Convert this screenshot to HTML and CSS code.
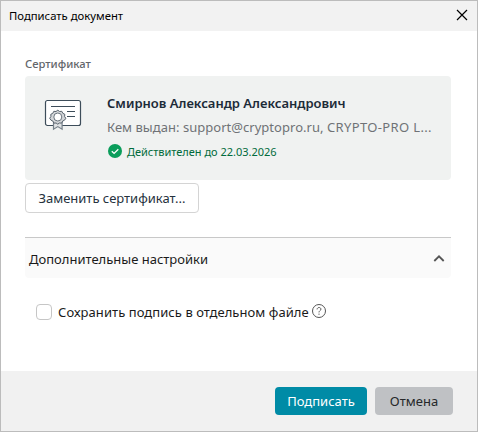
FILE: index.html
```html
<!DOCTYPE html>
<html lang="ru">
<head>
<meta charset="utf-8">
<title>Подписать документ</title>
<link rel="stylesheet" href="styles.css">
</head>
<body>
<div class="window">
  <header class="titlebar">
    <span class="title">Подписать документ</span>
    <svg class="close" width="12" height="12" viewBox="0 0 12 12"><path d="M1 1l10 10M11 1L1 11"/></svg>
  </header>
  <main class="content">
    <div class="label"><span>Сертификат</span></div>
    <section class="card">
      <svg class="cert-icon" width="38" height="32" viewBox="0 0 38 32">
        <rect class="paper" x="1.500" y="1.500" width="35" height="25" rx="2"/>
        <path d="M7 7.500h24M23 12.500h8M23 17.500h8"/>
        <path class="ribbon" d="M9.500 21v9.200l4.300-2.600 4.300 2.600V21z"/>
        <path class="seal-edge" d="M13.800 11.200l1.800 1.300 2.200-.2 1 2 2 1-.2 2.200 1.200 1.800-1.200 1.800-2 1-1 2-2.200-.1-1.600 1.200-1.700-1.200-2.200.1-1-2-2-1-1.200-1.800 1.200-1.800-.1-2.200 2-1 1-2 2.200.2z"/>
        <circle class="seal" cx="13.800" cy="18" r="4"/>
      </svg>
      <div class="info">
        <div class="name"><span>Смирнов Александр Александрович</span></div>
        <div class="issuer"><span>Кем выдан: support@cryptopro.ru, <span class="org">CRYPTO-PRO L...</span></span></div>
        <div class="valid">
          <svg width="14" height="14" viewBox="0 0 14 14"><circle cx="7" cy="7" r="7"/><path d="M3.800 7.200l2.300 2.200 4.200-4.200"/></svg>
          <span>Действителен до 22.03.2026</span>
        </div>
      </div>
    </section>
    <button class="replace"><span>Заменить сертификат...</span></button>
    <div class="accordion">
      <span>Дополнительные настройки</span>
      <svg width="12" height="8" viewBox="0 0 12 8"><path d="M1.300 6L6 1.300l4.700 4.700"/></svg>
    </div>
    <div class="option">
      <i class="checkbox"></i>
      <span>Сохранить подпись в отдельном файле</span>
      <svg width="14" height="14" viewBox="0 0 14 14"><circle cx="7" cy="7" r="6.500"/><path d="M5.100 5.400c0-2.500 3.800-2.500 3.800-.2 0 1.400-1.900 1.500-1.900 3.200M7 9.600v1.200"/></svg>
    </div>
  </main>
  <footer class="footer">
    <button class="primary"><span>Подписать</span></button>
    <button class="cancel"><span>Отмена</span></button>
  </footer>
</div>
</body>
</html>
```
FILE: styles.css
```css
* { box-sizing: border-box; }
body { margin: 0; font-family: "Noto Sans", sans-serif; font-size: 13px; color: #1a1a1a; }
svg { flex: none; fill: none; }
button { font: inherit; border-radius: 4px; padding: 0; display: flex; align-items: center; justify-content: center; }
span { white-space: nowrap; }
.window { width: 478px; height: 432px; border: 1px solid #bcbcbc; background: #fff; display: flex; flex-direction: column; }
.titlebar { height: 30px; background: #f2f2f2; display: flex; align-items: center; justify-content: space-between; padding: 0 9px 2px 8px; font-size: 11.3px; color: #000; }
.close { stroke: #000; stroke-width: 1.2; }
.content { flex: 1; padding: 24px 26px 0 24px; }
.label { height: 21px; line-height: 18px; font-size: 11.2px; font-weight: 500; color: #63666b; }
.card { height: 104px; border-radius: 4px; background: #f0f2f1; display: flex; }
.cert-icon { margin: 23px 0 0 19px; stroke: #3d4d5a; stroke-width: 1.2; }
.paper { fill: #fff; }
.ribbon { fill: #dfe2e4; stroke: #77818a; }
.seal-edge { fill: #d3d6d9; stroke: #56616b; stroke-width: 1; stroke-linejoin: round; }
.seal { fill: #fff; stroke: #6b757e; stroke-width: 1; }
.info { margin-left: 25px; padding-top: 16px; }
.name { height: 23px; line-height: 22px; font-weight: 600; color: #1c2b38; }
.issuer { height: 25px; line-height: 24px; letter-spacing: 0.03px; color: #6f7276; }
.org { letter-spacing: 0.36px; }
.valid { height: 22px; display: flex; align-items: center; gap: 5px; font-size: 11px; letter-spacing: -0.02px; color: #006b3c; margin-left: 1px; }
.valid circle { fill: #0a9d5b; }
.valid path { stroke: #fff; stroke-width: 1.300; }
.replace { width: 174px; height: 30px; margin-top: 3px; background: #fff; border: 1px solid #d4d4d4; color: #26323d; }
.accordion { height: 41px; margin-top: 24px; border-top: 1px solid #c8c8c8; border-radius: 0 0 4px 4px; background: #fafafa; display: flex; align-items: center; justify-content: space-between; padding: 1px 6px 0 4px; }
.accordion path { stroke: #555; stroke-width: 1.800; }
.option { height: 20px; margin: 24px 0 0 11px; display: flex; align-items: center; letter-spacing: 0.06px; }
.checkbox { width: 16px; height: 16px; border: 1px solid #c6c6c6; border-radius: 4px; background: #fff; margin-right: 6px; }
.option svg { margin: -2px 0 0 3px; stroke: #555; stroke-width: 1; }
.footer { height: 60px; background: #f1f1f1; display: flex; gap: 8px; padding: 16px 24px 0 0; justify-content: flex-end; }
.primary { width: 92px; height: 28px; border: 0; background: #008ba6; color: #fff; }
.cancel { width: 78px; height: 28px; border: 0; background: #bfc1c4; color: #26282a; }
```
